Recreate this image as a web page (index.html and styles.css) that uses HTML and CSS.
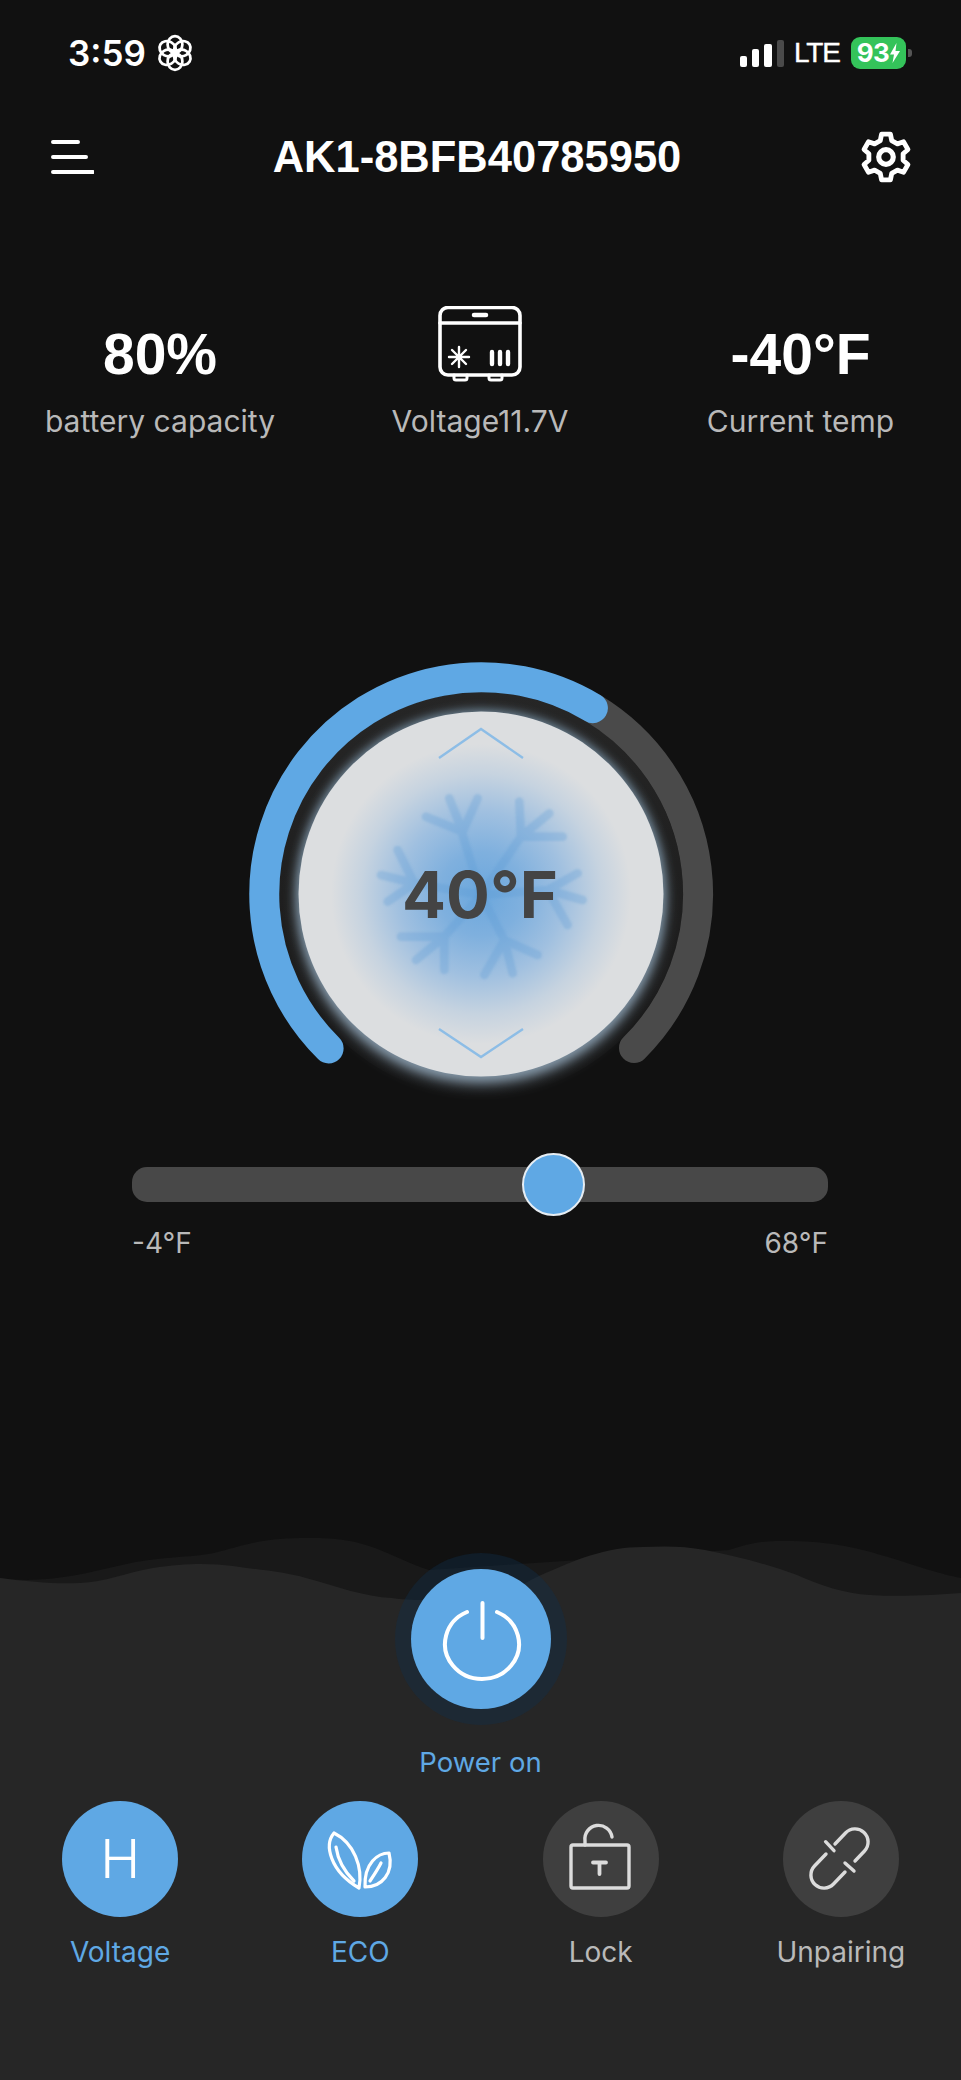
FILE: index.html
```html
<!DOCTYPE html>
<html lang="en">
<head>
<meta charset="utf-8">
<title>AK1-8BFB40785950</title>
<link rel="stylesheet" href="styles.css">
</head>
<body>
<div class="app">
  <header class="status">
    <div class="status-left">
      <span class="time">3:59</span>
      <svg class="flower" viewBox="-18 -18 36 36" fill="none" stroke="#fff" stroke-width="2.6">
        <ellipse cx="0" cy="-8" rx="7" ry="8"/>
        <ellipse cx="0" cy="-8" rx="7" ry="8" transform="rotate(60)"/>
        <ellipse cx="0" cy="-8" rx="7" ry="8" transform="rotate(120)"/>
        <ellipse cx="0" cy="-8" rx="7" ry="8" transform="rotate(180)"/>
        <ellipse cx="0" cy="-8" rx="7" ry="8" transform="rotate(240)"/>
        <ellipse cx="0" cy="-8" rx="7" ry="8" transform="rotate(300)"/>
      </svg>
    </div>
    <div class="status-right">
      <div class="signal">
        <i class="bar bar-1"></i><i class="bar bar-2"></i><i class="bar bar-3"></i><i class="bar bar-4"></i>
      </div>
      <span class="lte">LTE</span>
      <div class="battery"><span class="battery-num">93</span><svg class="bolt" viewBox="0 0 10 20"><path d="M6.5 0 0 11.5h4L2.5 20 10 8H5.5z" fill="#fff"/></svg></div>
      <i class="battery-cap"></i>
    </div>
  </header>

  <nav class="topbar">
    <svg class="menu" viewBox="0 0 42 36" fill="none" stroke="#fff" stroke-width="4" stroke-linecap="round">
      <path d="M2 3h25M2 18h33M2 33h40"/>
    </svg>
    <h1 class="title">AK1-8BFB40785950</h1>
    <svg class="gear" viewBox="-25 -25 50 50" fill="none" stroke="#fff" stroke-width="5" stroke-linejoin="round">
      <path transform="scale(.93)" d="M-5.9-17-4.6-23.6H4.6L5.9-17 11.8-13.6 18.1-15.7 22.7-7.8 17.7-3.4V3.4L22.7 7.8 18.1 15.7 11.8 13.6 5.9 17 4.6 23.6H-4.6L-5.9 17-11.8 13.6-18.1 15.7-22.7 7.8-17.7 3.4V-3.4L-22.7-7.8-18.1-15.7-11.8-13.6Z"/>
      <circle r="7" stroke-width="5"/>
    </svg>
  </nav>

  <section class="stats">
    <div class="stat">
      <div class="stat-top"><span class="stat-value">80%</span></div>
      <div class="stat-label">battery capacity</div>
    </div>
    <div class="stat">
      <div class="stat-top">
        <svg class="fridge" viewBox="0 0 84 76" fill="none" stroke="#fff" stroke-width="3.6" stroke-linecap="round">
          <rect x="2" y="1.500" width="80" height="67.500" rx="8"/>
          <path d="M2 17h80"/>
          <path d="M36 9h12" stroke-width="4.500"/>
          <path d="M16 69v3a2 2 0 0 0 2 2h9a2 2 0 0 0 2-2v-3M51 69v3a2 2 0 0 0 2 2h9a2 2 0 0 0 2-2v-3" stroke-width="3"/>
          <path d="M21 41v20M11 51h20M14 44l14 14M14 58l14-14" stroke-width="2.400"/>
          <path d="M54 46v12M62 46v12M70 46v12" stroke-width="4.400"/>
        </svg>
      </div>
      <div class="stat-label">Voltage11.7V</div>
    </div>
    <div class="stat">
      <div class="stat-top"><span class="stat-value">-40°F</span></div>
      <div class="stat-label">Current temp</div>
    </div>
  </section>

  <svg class="dial" viewBox="230 640 500 480">
    <defs>
      <linearGradient id="well" x1="0" y1="0" x2="0" y2="1">
        <stop offset="0" stop-color="#262626"/>
        <stop offset=".72" stop-color="#1c1c1c"/>
        <stop offset="1" stop-color="#111"/>
      </linearGradient>
      <radialGradient id="chill" gradientUnits="userSpaceOnUse" cx="480" cy="894" r="150">
        <stop offset="0" stop-color="#6ba7dd"/>
        <stop offset=".28" stop-color="#7fb0de"/>
        <stop offset=".55" stop-color="#a0c0e0"/>
        <stop offset=".8" stop-color="#c6d3e0"/>
        <stop offset="1" stop-color="#dcdee0"/>
      </radialGradient>
      <filter id="glow-soft" x="-20%" y="-20%" width="140%" height="140%">
        <feGaussianBlur stdDeviation="5"/>
      </filter>
      <filter id="glow-low" x="-20%" y="-20%" width="140%" height="140%">
        <feGaussianBlur stdDeviation="8"/>
      </filter>
      <filter id="flake-blur" x="-10%" y="-10%" width="120%" height="120%">
        <feGaussianBlur stdDeviation="3"/>
      </filter>
    </defs>
    <circle cx="480" cy="894" r="202" fill="url(#well)"/>
    <circle cx="480" cy="894" r="185" fill="#64798a" filter="url(#glow-soft)"/>
    <circle cx="480" cy="902" r="181" fill="#8799a8" filter="url(#glow-low)"/>
    <path d="M591.900 708.100A217 217 0 0 1 633 1048" fill="none" stroke="#4a4a4a" stroke-width="30" stroke-linecap="round"/>
    <path d="M327.600 1048.400A217 217 0 0 1 591.900 708.100" fill="none" stroke="#5fa8e4" stroke-width="30" stroke-linecap="round"/>
    <circle cx="480" cy="894" r="182.500" fill="#dcdee0"/>
    <circle cx="480" cy="894" r="150" fill="url(#chill)"/>
    <g transform="translate(340 770) scale(.3333)" fill="none" stroke="#5c9bd4" stroke-opacity=".3" stroke-width="26" stroke-linecap="round" stroke-linejoin="round" filter="url(#flake-blur)">
      <path d="M420 375 365 195M365 185 325 85M365 185 410 85M365 185 255 140"/>
      <path d="M420 375 540 200M540 200 535 95M540 200 625 130M540 200 665 200"/>
      <path d="M420 375 620 360M620 360 710 310M620 360 725 390M620 360 680 465"/>
      <path d="M420 375 490 510M490 510 590 555M490 510 515 610M490 510 430 615"/>
      <path d="M420 375 310 500M310 500 180 500M310 500 225 570M310 500 310 600"/>
      <path d="M420 375 220 340M220 340 170 240M220 340 120 315M220 340 140 395"/>
    </g>
    <path d="M438 758 480 729 522 758M438 1029 480 1057 522 1029" fill="none" stroke="#8dbde6" stroke-width="2.400"/>
    <text class="dial-temp" x="479" y="918" text-anchor="middle">40°F</text>
  </svg>

  <section class="range">
    <div class="track"><div class="thumb"></div></div>
    <div class="range-labels"><span>-4°F</span><span>68°F</span></div>
  </section>

  <section class="panel">
    <svg class="waves" viewBox="0 1538 961 62" preserveAspectRatio="none">
      <path fill="#191919" d="M0 1578C40 1584 80 1575 122 1565C160 1556 190 1558 214 1553C240 1547 255 1539 300 1538C340 1537 360 1542 380 1550C400 1558 415 1566 429 1570L729 1550C745 1545 755 1542 775 1541C820 1540 850 1545 888 1557C920 1567 940 1574 961 1578V1600H0Z"/>
      <path fill="#262626" d="M0 1578C30 1582 55 1584 80 1583C105 1582 125 1573 153 1568C185 1563 210 1563 233 1566C260 1570 285 1572 306 1578C335 1586 365 1597 392 1598C405 1600 420 1600 429 1600H500C515 1590 525 1582 539 1576C575 1560 605 1547 643 1547C665 1546 685 1546 705 1550C740 1557 770 1565 797 1575C820 1585 845 1594 870 1595C900 1597 935 1595 961 1593V1600H0Z"/>
    </svg>
    <div class="panel-body">
      <button class="power-halo" type="button">
        <span class="power">
          <svg class="power-icon" viewBox="0 0 100 100" fill="none" stroke="#fff" stroke-width="4" stroke-linecap="round">
            <path d="M36 23A37 35 0 1 0 66 23"/>
            <path d="M51.500 14V49"/>
          </svg>
        </span>
      </button>
      <div class="power-label">Power on</div>
      <div class="actions">
        <div class="action on">
          <div class="action-circle"><span class="h-mark">H</span></div>
          <div class="action-label">Voltage</div>
        </div>
        <div class="action on">
          <div class="action-circle">
            <svg class="action-icon" viewBox="0 0 116 116" fill="none" stroke="#fff" stroke-width="3.200" stroke-linejoin="round" stroke-linecap="round">
              <path d="M32 32C22 44 28 70 57 87C61 66 52 42 32 32Z"/>
              <path d="M34 46C36 60 44 72 52 80"/>
              <path d="M87 52C76 52 62 62 63 86C80 86 92 72 87 52Z"/>
              <path d="M68 80C72 74 76 68 79 62"/>
            </svg>
          </div>
          <div class="action-label">ECO</div>
        </div>
        <div class="action">
          <div class="action-circle">
            <svg class="action-icon" viewBox="0 0 116 116" fill="none" stroke="#dcdcdc" stroke-width="3.400" stroke-linejoin="round" stroke-linecap="round">
              <rect x="28" y="44" width="58" height="43" rx="2"/>
              <path d="M42 44V40A13.500 13.500 0 0 1 69 36"/>
              <path d="M50 61.500H63M56.500 61.500V73" stroke-width="3.800"/>
            </svg>
          </div>
          <div class="action-label">Lock</div>
        </div>
        <div class="action">
          <div class="action-circle">
            <svg class="action-icon" viewBox="0 0 116 116" fill="none" stroke="#dcdcdc" stroke-width="3.400" stroke-linecap="round">
              <path d="M52 43 62.500 32A13 13 0 0 1 81.500 50L72 60"/>
              <path d="M62 71 50.500 83A13 13 0 0 1 31.500 65L43 53"/>
              <path d="M42.600 40.700 51 49.700M62 62 71 70"/>
            </svg>
          </div>
          <div class="action-label">Unpairing</div>
        </div>
      </div>
    </div>
  </section>
</div>
</body>
</html>
```

FILE: styles.css
```css
* { box-sizing: border-box; }
html, body { margin: 0; padding: 0; background: #111; }
body { font-family: Inter, "Liberation Sans", sans-serif; color: #fff; }

.app {
  width: 961px;
  height: 2080px;
  display: flex;
  flex-direction: column;
  overflow: hidden;
  background: #111;
}

/* status bar */
.status {
  height: 106px;
  display: flex;
  justify-content: space-between;
  align-items: center;
  padding: 0 49px 0 68px;
}
.status-left { display: flex; align-items: center; gap: 10px; }
.time { font-size: 35px; font-weight: 600; line-height: 40px; }
.flower { width: 38px; height: 38px; display: block; }
.status-right { display: flex; align-items: center; }
.signal { display: flex; align-items: flex-end; gap: 5px; height: 27px; margin-right: 10px; }
.bar { display: block; width: 7px; background: #fff; border-radius: 2px; }
.bar-1 { height: 11px; }
.bar-2 { height: 18px; }
.bar-3 { height: 23px; width: 8px; }
.bar-4 { height: 27px; background: #4a4a4a; }
.lte { font-family: "Liberation Sans", sans-serif; font-size: 28px; font-weight: 400; line-height: 30px; width: 44px; margin-right: 13px; letter-spacing: -1.2px; -webkit-text-stroke: .4px #fff; }
.battery {
  width: 55px;
  height: 32px;
  background: #34c35a;
  border-radius: 9px;
  display: flex;
  align-items: center;
  justify-content: center;
  gap: 1px;
}
.battery-num { font-size: 26px; font-weight: 700; line-height: 30px; letter-spacing: -0.5px; }
.bolt { width: 10px; height: 20px; display: block; }
.battery-cap { display: block; width: 4px; height: 8px; margin-left: 2px; background: #555; border-radius: 0 3px 3px 0; }

/* top bar */
.topbar {
  height: 102px;
  display: flex;
  align-items: center;
  justify-content: space-between;
  padding: 0 49px 0 50px;
}
.menu { width: 44px; height: 36px; display: block; }
.title { margin: 0; font-family: "Liberation Sans", sans-serif; font-size: 43.500px; font-weight: 700; line-height: 50px; }
.gear { width: 52px; height: 52px; display: block; }

/* stats */
.stats {
  margin-top: 97px;
  display: grid;
  grid-template-columns: 320px 320px 321px;
}
.stat { display: flex; flex-direction: column; align-items: center; }
.stat-top { height: 78px; display: flex; align-items: center; justify-content: center; }
.stat-value { font-family: "Liberation Sans", sans-serif; font-size: 57px; font-weight: 700; line-height: 60px; margin-top: 20px; }
.stat-label { margin-top: 20px; font-size: 30px; line-height: 36px; color: #b9b9b9; }
.fridge { width: 84px; height: 76px; display: block; }

/* dial */
.dial {
  display: block;
  width: 500px;
  height: 480px;
  margin: 201px auto 0;
  flex: none;
}
.dial-temp { font-family: Inter, "Liberation Sans", sans-serif; font-size: 65px; font-weight: 700; fill: #444; }

/* range */
.range { margin: 47px 133px 0 132px; }
.track { height: 35px; background: #484848; border-radius: 15px; position: relative; }
.thumb {
  position: absolute;
  left: 390px;
  top: -14px;
  width: 63px;
  height: 63px;
  border-radius: 50%;
  background: #5fa8e4;
  border: 2px solid #e6edf3;
}
.range-labels {
  margin-top: 25px;
  display: flex;
  justify-content: space-between;
  font-size: 28px;
  line-height: 32px;
  color: #b9b9b9;
}

/* bottom panel */
.panel { margin-top: auto; display: flex; flex-direction: column; }
.waves { display: block; width: 961px; height: 62px; }
.panel-body {
  height: 480px;
  background: #262626;
  display: flex;
  flex-direction: column;
  align-items: center;
}
.power-halo {
  margin: -47px 0 0;
  width: 172px;
  height: 172px;
  padding: 16px;
  border: 0;
  border-radius: 50%;
  background: rgba(14, 50, 80, .35);
  position: relative;
}
.power {
  width: 140px;
  height: 140px;
  border-radius: 50%;
  background: #5fa8e4;
  display: flex;
  align-items: center;
  justify-content: center;
}
.power-icon { width: 100px; height: 100px; display: block; }
.power-label { margin-top: 19px; font-size: 27.500px; line-height: 36px; color: #5fa8e4; }
.actions {
  margin-top: 21px;
  width: 961px;
  display: grid;
  grid-template-columns: repeat(4, 1fr);
}
.action { display: flex; flex-direction: column; align-items: center; color: #b9b9b9; }
.action.on { color: #5fa8e4; }
.action-circle {
  width: 116px;
  height: 116px;
  border-radius: 50%;
  background: #3f3f3f;
  display: flex;
  align-items: center;
  justify-content: center;
}
.action.on .action-circle { background: #5fa8e4; }
.action-icon { width: 116px; height: 116px; display: block; }
.h-mark { font-size: 54px; font-weight: 350; line-height: 60px; color: #fff; }
.action-label { margin-top: 17px; font-size: 28px; line-height: 36px; }
```
